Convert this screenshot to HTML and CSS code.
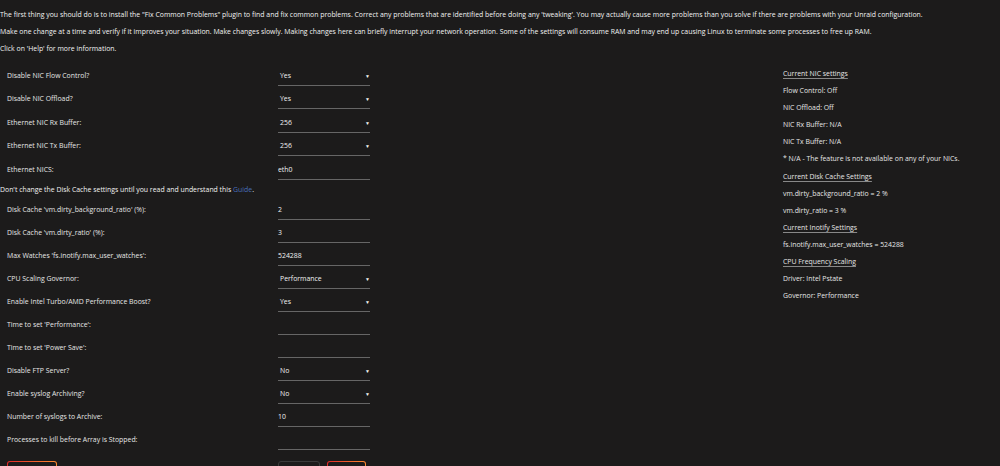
FILE: index.html
```html
<!DOCTYPE html>
<html lang="en">
<head>
  <meta charset="UTF-8">
  <title>Tips and Tweaks</title>
  <link rel="stylesheet" href="styles.css">
</head>
<body>
  <div class="intro">
    <p>The first thing you should do is to install the "Fix Common Problems" plugin to find and fix common problems. Correct any problems that are identified before doing any 'tweaking'. You may actually cause more problems than you solve if there are problems with your Unraid configuration.</p>
    <p>Make one change at a time and verify if it improves your situation. Make changes slowly. Making changes here can briefly interrupt your network operation. Some of the settings will consume RAM and may end up causing Linux to terminate some processes to free up RAM.</p>
    <p>Click on 'Help' for more information.</p>
  </div>

  <div class="page">
    <form class="settings">
      <div class="group group-nic">
        <div class="row">
          <label>Disable NIC Flow Control?</label>
          <div class="select">Yes<span class="arrow">▼</span></div>
        </div>
        <div class="row">
          <label>Disable NIC Offload?</label>
          <div class="select">Yes<span class="arrow">▼</span></div>
        </div>
        <div class="row">
          <label>Ethernet NIC Rx Buffer:</label>
          <div class="select">256<span class="arrow">▼</span></div>
        </div>
        <div class="row">
          <label>Ethernet NIC Tx Buffer:</label>
          <div class="select">256<span class="arrow">▼</span></div>
        </div>
        <div class="row">
          <label>Ethernet NICS:</label>
          <div class="input">eth0</div>
        </div>
      </div>

      <div class="note">Don't change the Disk Cache settings until you read and understand this <a href="#">Guide</a>.</div>

      <div class="group">
        <div class="row">
          <label>Disk Cache 'vm.dirty_background_ratio' (%):</label>
          <div class="input">2</div>
        </div>
        <div class="row">
          <label>Disk Cache 'vm.dirty_ratio' (%):</label>
          <div class="input">3</div>
        </div>
        <div class="row">
          <label>Max Watches 'fs.inotify.max_user_watches':</label>
          <div class="input">524288</div>
        </div>
        <div class="row">
          <label>CPU Scaling Governor:</label>
          <div class="select">Performance<span class="arrow">▼</span></div>
        </div>
        <div class="row">
          <label>Enable Intel Turbo/AMD Performance Boost?</label>
          <div class="select">Yes<span class="arrow">▼</span></div>
        </div>
        <div class="row">
          <label>Time to set 'Performance':</label>
          <div class="input"></div>
        </div>
        <div class="row">
          <label>Time to set 'Power Save':</label>
          <div class="input"></div>
        </div>
        <div class="row">
          <label>Disable FTP Server?</label>
          <div class="select">No<span class="arrow">▼</span></div>
        </div>
        <div class="row">
          <label>Enable syslog Archiving?</label>
          <div class="select">No<span class="arrow">▼</span></div>
        </div>
        <div class="row">
          <label>Number of syslogs to Archive:</label>
          <div class="input">10</div>
        </div>
        <div class="row">
          <label>Processes to kill before Array is Stopped:</label>
          <div class="input"></div>
        </div>
      </div>

      <div class="actions">
        <button type="button" class="btn btn-default">Default</button>
        <div class="actions-right">
          <button type="button" class="btn btn-disabled">Apply</button>
          <button type="button" class="btn btn-done">Done</button>
        </div>
      </div>
    </form>

    <div class="info">
      <div class="info-title">Current NIC settings</div>
      <div>Flow Control: Off</div>
      <div>NIC Offload: Off</div>
      <div>NIC Rx Buffer: N/A</div>
      <div>NIC Tx Buffer: N/A</div>
      <div>* N/A - The feature is not available on any of your NICs.</div>
      <div class="info-title">Current Disk Cache Settings</div>
      <div>vm.dirty_background_ratio = 2 %</div>
      <div>vm.dirty_ratio = 3 %</div>
      <div class="info-title">Current Inotify Settings</div>
      <div>fs.inotify.max_user_watches = 524288</div>
      <div class="info-title">CPU Frequency Scaling</div>
      <div>Driver: Intel Pstate</div>
      <div>Governor: Performance</div>
    </div>
  </div>
</body>
</html>
```

FILE: styles.css
```css
body {
  margin: 0;
  padding: 0;
  background: #1c1b1b;
  color: #f2f2f2;
  font-family: "Open Sans", "Noto Sans", Arial, sans-serif;
  font-size: 6.9px;
  overflow: hidden;
}

.intro {
  padding-top: 6px;
}

.intro p {
  margin: 0;
  line-height: 17px;
}

.page {
  display: grid;
  grid-template-columns: 783px 1fr;
  padding-top: 9px;
}

.settings {
  display: flex;
  flex-direction: column;
}

.row {
  display: grid;
  grid-template-columns: 278px 92px;
  height: 23px;
}

.group-nic .row {
  height: 23.4px;
}

.row label {
  padding-left: 7px;
  line-height: 20px;
  color: #e6e6e6;
}

.select,
.input {
  position: relative;
  height: 19px;
  line-height: 20px;
  border-bottom: 1px solid #666;
  color: #f2f2f2;
}

.select {
  padding-left: 2px;
}

.arrow {
  position: absolute;
  right: 0;
  top: 0;
  font-size: 5px;
}

.note {
  height: 17px;
  line-height: 14px;
}

.note a {
  color: #486dba;
  text-decoration: none;
}

.actions {
  display: grid;
  grid-template-columns: 278px 1fr;
  margin-top: 8px;
}

.actions-right {
  display: flex;
  gap: 7px;
}

.btn {
  font-family: inherit;
  font-size: 7px;
  color: #f2f2f2;
  height: 26px;
  padding: 0;
  border: 1px solid transparent;
  border-radius: 3px;
  background-image: linear-gradient(#1c1b1b, #1c1b1b), linear-gradient(90deg, #e22828, #ff8c2f);
  background-origin: border-box;
  background-clip: padding-box, border-box;
}

.btn-default {
  margin-left: 7px;
  width: 50px;
}

.btn-disabled {
  width: 42px;
  color: #666;
  border-color: #3a3a3a;
  background: #1c1b1b;
}

.btn-done {
  width: 39px;
}

.info {
  display: flex;
  flex-direction: column;
  margin-top: -1px;
  line-height: 17.1px;
  color: #e6e6e6;
}

.info-title {
  text-decoration: underline;
  text-decoration-color: #888;
  text-underline-offset: 2px;
}
```
